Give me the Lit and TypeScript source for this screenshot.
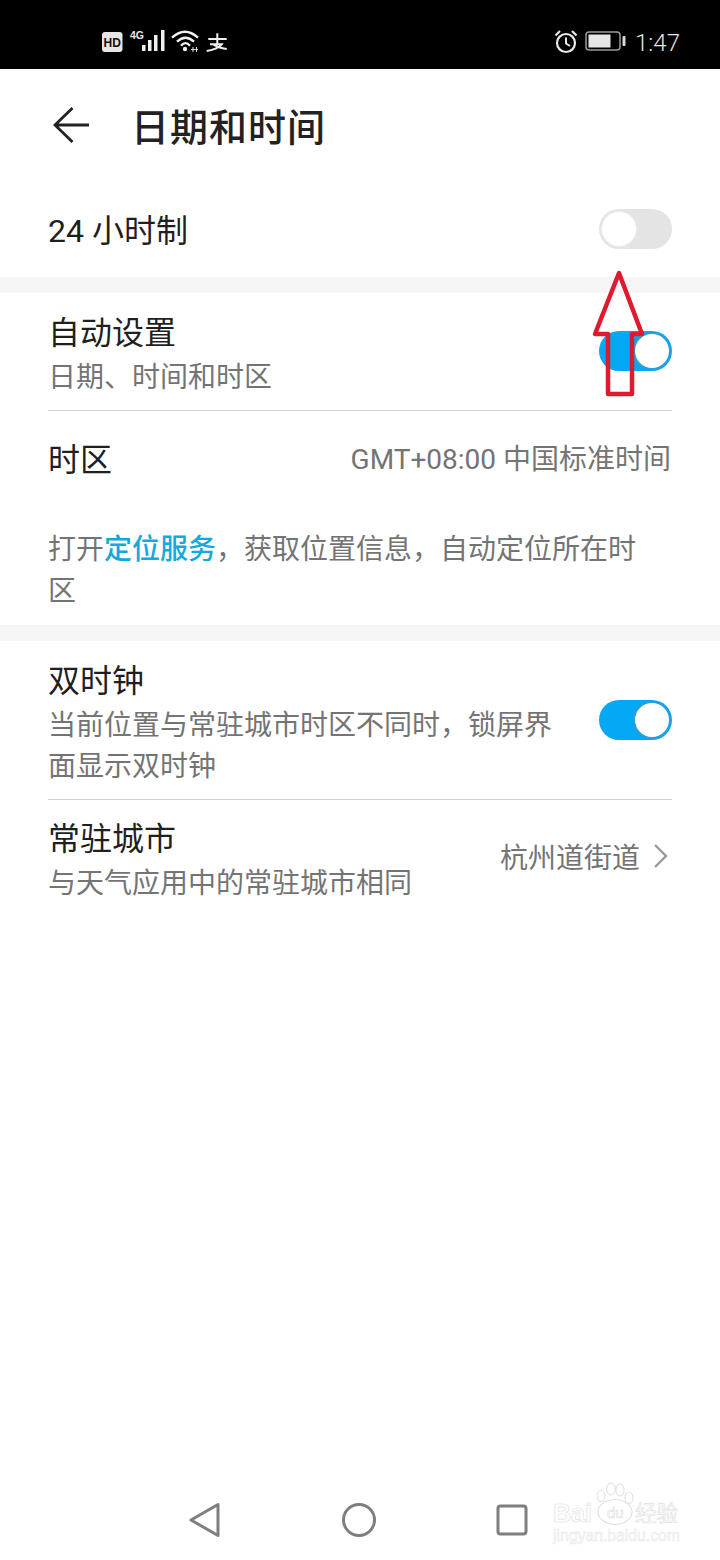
import { LitElement, html, css } from "lit";
import { customElement } from "lit/decorators.js";

@customElement("app-root")
export class AppRoot extends LitElement {
  static styles = css`
    :host { display: block; width: 720px; height: 1560px; position: relative; overflow: hidden; background: #fff;
      font-family: Roboto, "Noto Sans CJK SC", sans-serif; color: #1f1f1f; }
    .page { height: 1560px; display: flex; flex-direction: column; }
    .status { height: 69px; flex: none; background: #000; color: #e8e8e8; display: flex; align-items: center; padding: 13px 40px 0 101px; box-sizing: border-box; }
    .status svg { display: block; flex: none; }
    .status-left { display: flex; align-items: center; }
    .status-right { margin-left: auto; display: flex; align-items: center; }
    .batt { margin-left: 7px; }
    .clock { font-size: 24px; font-weight: 300; color: #e4e4e4; margin: 4px 0 0 9px; line-height: 28px; }
    .header { height: 116px; flex: none; display: flex; align-items: center; padding: 0 0 0 53px; box-sizing: border-box; }
    .header svg { margin-top: -4px; }
    .title { font-size: 38px; font-weight: 500; margin: 2px 0 0 42px; line-height: 50px; letter-spacing: 1px; color: #222; }
    .row { display: flex; align-items: center; justify-content: space-between; padding: 0 48px; }
    .r24 { height: 92px; }
    .r24 .switch { margin-top: -4px; }
    .main { font-size: 32px; line-height: 44px; }
    .sub { font-size: 28px; line-height: 41px; color: #747474; margin-top: 2px; }
    .band { height: 16px; background: #f6f6f6; flex: none; }
    .auto { height: 117px; }
    .auto .text { margin-top: 5px; }
    .auto .switch { margin-top: -2px; }
    .divider { height: 1px; background: #d2d2d2; margin: 0 48px; flex: none; }
    .tz { height: 98px; }
    .tz .val { margin: 0 1px 6px 0; }
    .val { font-size: 28px; color: #747474; white-space: nowrap; }
    .note { padding: 20px 80px 12px 48px; font-size: 28px; line-height: 42px; color: #747474; }
    .note b { font-weight: 500; color: #12a9dc; }
    .dual { height: 158px; align-items: flex-start; padding-top: 18px; box-sizing: border-box; }
    .dual .text { width: 510px; }
    .dual .switch { margin-top: 41px; }
    .dual .sub { margin-top: 2px; }
    .city { height: 116px; box-sizing: border-box; }
    .city .text { margin-top: 4px; }
    .city .val { display: flex; align-items: center; gap: 13px; margin: 0 3px 4px 0; }
    .city svg { display: block; flex: none; }
    .switch { width: 73px; height: 40px; border-radius: 20px; box-sizing: border-box; position: relative; flex: none; }
    .switch.off { background: #e4e4e4; }
    .switch.on { background: #05a8f5; }
    .switch i { position: absolute; width: 34px; height: 34px; border-radius: 50%; background: #fff; top: 3px; }
    .switch.off i { left: 3px; box-shadow: 0 0 0 1px #ececec; }
    .switch.on i { right: 3px; box-shadow: 0 0 0 2px #2a9fd6; }
    .nav { margin-top: auto; height: 80px; flex: none; display: flex; align-items: center; padding: 0 0 0 188px; box-sizing: border-box; gap: 120px; }
    .nav svg { display: block; flex: none; }
    .mark { position: absolute; left: 0; top: 0; pointer-events: none; }
    .wm { position: absolute; left: 552px; top: 1482px; width: 132px; height: 66px; color: #fff; }
    .paw { position: absolute; left: 44px; top: 0; }
    .wm span { position: absolute; white-space: nowrap; -webkit-text-stroke: 0.7px #e2e2e2; font-family: "Liberation Sans", sans-serif; }
    .wm .bai { left: 1px; top: 17px; font-size: 25px; line-height: 28px; font-weight: 700; }
    .wm .du { left: 55px; top: 23px; font-size: 15px; line-height: 16px; }
    .wm .jy { left: 1px; top: 45px; font-size: 15.75px; line-height: 18px; -webkit-text-stroke: 0.5px #e4e4e4; }
    .wm .cn { left: 83px; top: 18px; font-size: 21.5px; line-height: 24px; font-family: "Noto Sans CJK SC", sans-serif; }
  `;

  render() {
    return html`
      <div class="page">
        <div class="status">
          <div class="status-left">
            <svg width="128" height="34" viewBox="0 0 128 34">
              <rect x="1" y="8" width="20.5" height="20" rx="3" fill="#e6e6e6"/>
              <text x="11.2" y="23" text-anchor="middle" font-family="Liberation Sans" font-size="12" font-weight="700" fill="#111">HD</text>
              <text x="29" y="15" font-family="Liberation Sans" font-size="10.5" font-weight="700" fill="#e6e6e6">4G</text>
              <g fill="#f0f0f0">
                <rect x="41" y="21" width="3.5" height="6"/><rect x="47" y="16" width="3.5" height="11"/><rect x="53" y="11" width="3.5" height="16"/><rect x="60" y="6" width="3.5" height="21"/>
              </g>
              <g fill="none" stroke="#f0f0f0" stroke-width="2.4">
                <path d="M71 13.7Q84 1.7 97 13.7"/><path d="M76 17.7Q84.5 9.7 93 17.7"/><path d="M80 21.7Q84.5 16.5 89 21.7"/>
              </g>
              <circle cx="84" cy="25" r="2.2" fill="#f0f0f0"/>
              <path d="M90 25.5h7M92 23v5M95.5 23v5" stroke="#d8d8d8" stroke-width="1.1" fill="none"/>
              <path d="M107.3 15H125.7M116.3 9.3V20.3M109 20.3H120.7Q117 25 105.7 27M112.3 20.3Q117 23.5 125.7 25" fill="none" stroke="#efefef" stroke-width="2"/>
            </svg>
          </div>
          <div class="status-right">
            <svg width="24" height="26" viewBox="0 0 24 26">
              <circle cx="12" cy="15" r="9" fill="none" stroke="#e8e8e8" stroke-width="2.2"/>
              <path d="M12 9.5v6l4 2.5" fill="none" stroke="#e8e8e8" stroke-width="2"/>
              <path d="M1.5 7.5 6 3M22.5 7.5 18 3" stroke="#e8e8e8" stroke-width="2.2"/>
            </svg>
            <svg class="batt" width="41" height="22" viewBox="0 0 41 22">
              <rect x="1" y="2" width="34" height="18" rx="3" fill="none" stroke="#9a9a9a" stroke-width="1.5"/>
              <rect x="3.5" y="4.5" width="22" height="13" fill="#e6e6e6"/>
              <rect x="37.5" y="6" width="3" height="10" rx="1" fill="#d8d8d8"/>
            </svg>
            <span class="clock">1:47</span>
          </div>
        </div>

        <div class="header">
          <svg width="36" height="38" viewBox="0 0 36 38">
            <path d="M36 19H2M19.5 2 2 19l17.5 17" fill="none" stroke="#222" stroke-width="2.8"/>
          </svg>
          <div class="title">日期和时间</div>
        </div>

        <div class="row r24">
          <div class="main">24 小时制</div>
          <div class="switch off"><i></i></div>
        </div>
        <div class="band"></div>

        <div class="row auto">
          <div class="text"><div class="main">自动设置</div><div class="sub">日期、时间和时区</div></div>
          <div class="switch on"><i></i></div>
        </div>
        <div class="divider"></div>
        <div class="row tz">
          <div class="main">时区</div>
          <div class="val">GMT+08:00 中国标准时间</div>
        </div>
        <div class="note">打开<b>定位服务</b>，获取位置信息，自动定位所在时区</div>
        <div class="band"></div>

        <div class="row dual">
          <div class="text"><div class="main">双时钟</div><div class="sub">当前位置与常驻城市时区不同时，锁屏界面显示双时钟</div></div>
          <div class="switch on"><i></i></div>
        </div>
        <div class="divider"></div>
        <div class="row city">
          <div class="text"><div class="main">常驻城市</div><div class="sub">与天气应用中的常驻城市相同</div></div>
          <div class="val">杭州道街道
            <svg width="16" height="26" viewBox="0 0 16 26"><path d="M2 2l11 11L2 24" fill="none" stroke="#999" stroke-width="2.4"/></svg>
          </div>
        </div>

        <div class="nav">
          <svg width="34" height="36" viewBox="0 0 34 36"><path d="M30 2.5v31L3 18z" fill="none" stroke="#7f7f7f" stroke-width="3" stroke-linejoin="round"/></svg>
          <svg width="34" height="34" viewBox="0 0 34 34"><circle cx="17" cy="17" r="15.5" fill="none" stroke="#7f7f7f" stroke-width="3"/></svg>
          <svg width="32" height="32" viewBox="0 0 32 32"><rect x="2" y="2" width="28" height="28" rx="2.5" fill="none" stroke="#7f7f7f" stroke-width="3"/></svg>
        </div>
      </div>

      <svg class="mark" width="720" height="420" viewBox="0 0 720 420">
        <path d="M619 273 595 334H608V394H632V334H642Z" fill="none" stroke="#df1a2e" stroke-width="4.5" stroke-linejoin="round"/>
      </svg>

      <div class="wm">
        <svg class="paw" width="44" height="44" viewBox="0 0 44 44">
          <g fill="#fff" stroke="#e2e2e2" stroke-width="1.2">
            <ellipse cx="5" cy="14" rx="4" ry="5.5"/><ellipse cx="15" cy="7" rx="4.5" ry="6"/><ellipse cx="24" cy="8" rx="4" ry="6"/><ellipse cx="33" cy="16" rx="4" ry="5.5"/>
            <ellipse cx="19" cy="30" rx="17" ry="12.5"/>
          </g>
        </svg>
        <span class="bai">Bai</span>
        <span class="du">du</span>
        <span class="cn">经验</span>
        <span class="jy">jingyan.baidu.com</span>
      </div>
    `;
  }
}
